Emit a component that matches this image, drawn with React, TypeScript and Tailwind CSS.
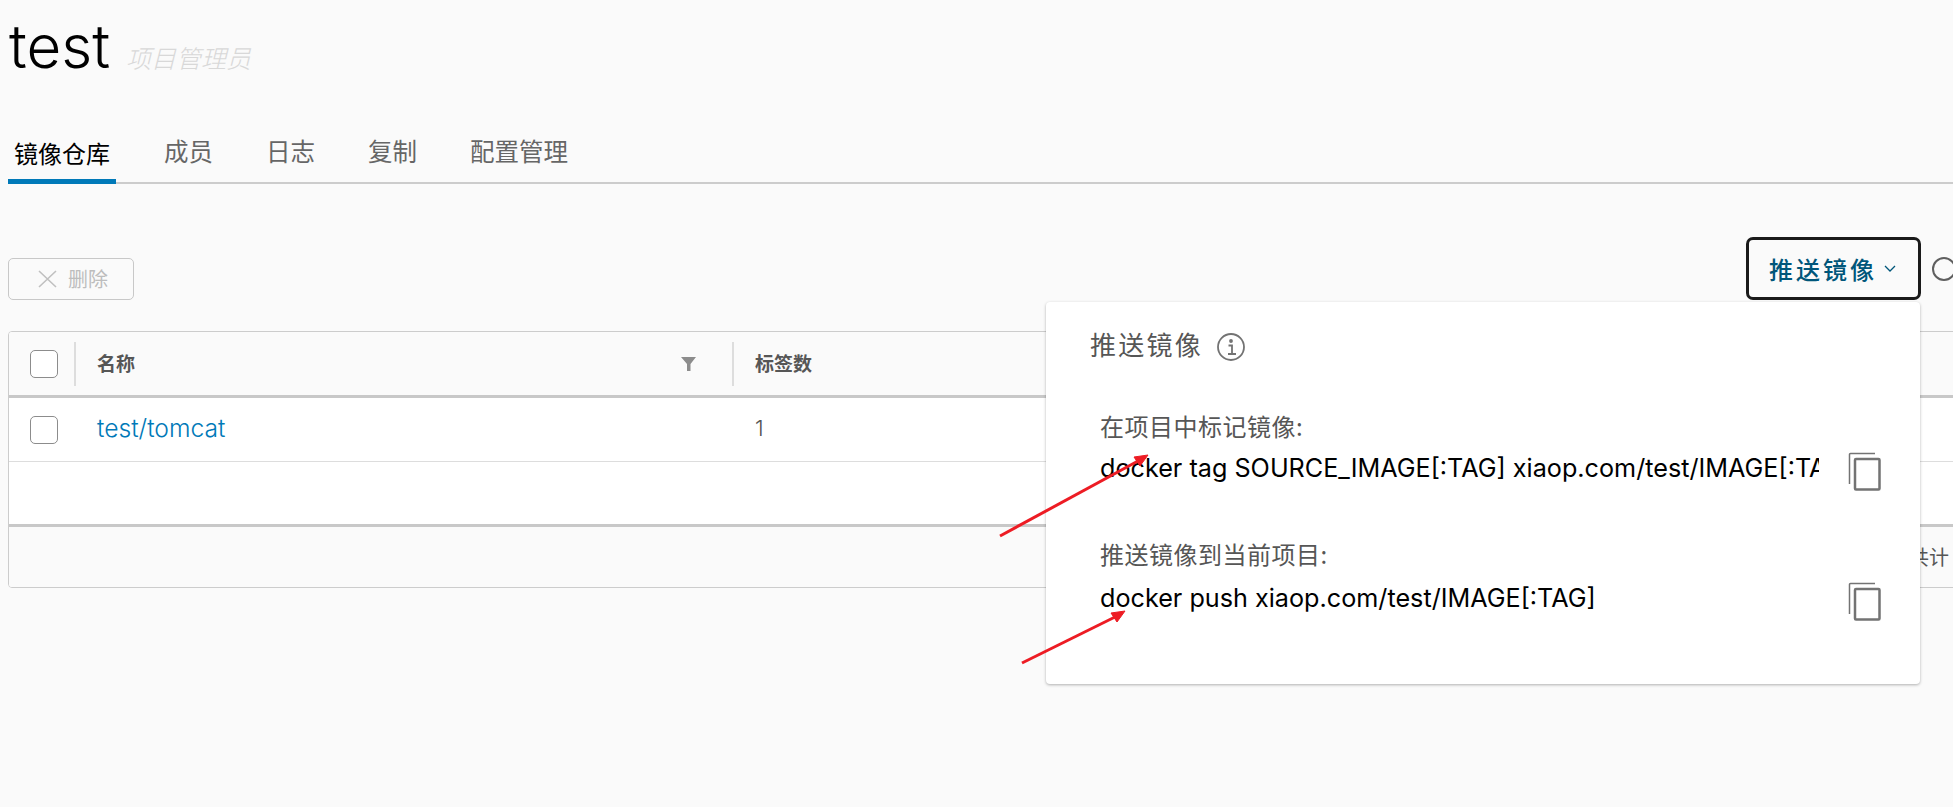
const CJK = '"Noto Sans CJK SC", sans-serif'
const LATIN = 'Inter, "Noto Sans CJK SC", sans-serif'

const tabs = ['镜像仓库', '成员', '日志', '复制', '配置管理']

function Checkbox() {
  return <div className="w-[28px] h-[28px] rounded-[5px] border border-[#8c8c8c] bg-white shrink-0" />
}

function CopyIcon() {
  return (
    <svg width="33" height="39" viewBox="0 0 33 39" fill="none" stroke="#737373" className="shrink-0 -mb-[8px]">
      <path d="M27 1.5H2.5a1 1 0 0 0-1 1V32" strokeWidth="1.5" />
      <rect x="7" y="7" width="24.5" height="30.5" rx="1" strokeWidth="2.5" />
    </svg>
  )
}

function CommandRow({ label, command, gap }: { label: string; command: string; gap: string }) {
  return (
    <div className="flex items-end justify-between">
      <div className="w-[719px] min-w-0">
        <p className="text-[24px] leading-[30px] tracking-[0.5px] text-[#565656]">{label}</p>
        <p
          className={`${gap} text-[25.2px] leading-[30px] text-black whitespace-nowrap overflow-hidden`}
          style={{ fontFamily: LATIN }}
        >
          {command}
        </p>
      </div>
      <CopyIcon />
    </div>
  )
}

export default function App() {
  return (
    <div
      className="relative w-[1953px] h-[807px] overflow-hidden bg-[#fafafa] pl-[8px]"
      style={{ fontFamily: CJK }}
    >
      <div className="flex items-baseline h-[92px] pt-[11px] pl-[1px]">
        <h1 className="text-[60px] leading-[70px] font-light text-black" style={{ fontFamily: LATIN }}>
          test
        </h1>
        <span className="ml-[16px] text-[25px] italic font-light text-[#d8d8d8]">项目管理员</span>
      </div>

      <div className="flex h-[92px] border-b-2 border-[#cccccc] gap-[45px] items-end w-[1945px]">
        {tabs.map((tab, i) => (
          <div
            key={tab}
            className={
              i === 0
                ? 'h-[49px] -mb-[2px] px-[6px] -mr-[1px] border-b-[5px] border-[#0079b8] text-[24px] leading-[36px] text-black'
                : 'h-[49px] px-[4px] text-[24.5px] leading-[36px] text-[#666666]'
            }
          >
            {tab}
          </div>
        ))}
      </div>

      <div className="flex items-end justify-between w-[1948px] mt-[53px]">
        <button className="flex items-center gap-[11px] w-[126px] h-[42px] pl-[29px] rounded-[5px] border border-[#c8c8c8] text-[20px] text-[#bdbdbd]">
          <svg width="19" height="18" viewBox="0 0 19 18" stroke="#c0c0c0" strokeWidth="1.6" fill="none">
            <path d="M1 1l17 16M18 1L1 17" />
          </svg>
          删除
        </button>
        <div className="flex items-center gap-[11px]">
          <button className="flex items-center justify-between w-[175px] h-[63px] pl-[20px] pr-[22px] rounded-[7px] border-[3px] border-[#1a1a1a] text-[24px] tracking-[3px] font-medium text-[#00567a]">
            推送镜像
            <svg width="12" height="7" viewBox="0 0 12 7" fill="none" stroke="#00567a" strokeWidth="1.3">
              <path d="M1 1l5 5 5-5" />
            </svg>
          </button>
          <svg width="24" height="24" viewBox="0 0 24 24" fill="none" stroke="#5f5f5f" strokeWidth="2" className="shrink-0">
            <circle cx="12" cy="12" r="11" />
          </svg>
        </div>
      </div>

      <div className="mt-[31px] w-[2000px] h-[257px] rounded-[4px] border border-[#cccccc] bg-white flex flex-col overflow-hidden">
        <div className="flex items-center h-[66px] bg-[#fafafa] border-b-[3px] border-[#c8c8c8] shrink-0">
          <div className="w-[67px] pl-[21px] h-[44px] border-r-2 border-[#dddddd] flex items-center">
            <Checkbox />
          </div>
          <div className="w-[658px] pl-[21px] pr-[36px] h-[44px] border-r-2 border-[#dddddd] flex items-center justify-between text-[19px] font-bold text-[#565656]">
            名称
            <svg width="15" height="14" viewBox="0 0 15 14" fill="#8c8c8c">
              <path d="M0 0h15L9.5 7v7H6V7z" />
            </svg>
          </div>
          <div className="pl-[21px] text-[19px] font-bold text-[#565656]">标签数</div>
        </div>
        <div className="flex items-center h-[64px] border-b border-[#dddddd] shrink-0">
          <div className="w-[67px] pl-[21px] flex items-center">
            <Checkbox />
          </div>
          <a className="w-[658px] pl-[21px] -mt-[2px] text-[24.7px] font-light text-[#0079b8]" style={{ fontFamily: LATIN }}>
            test/tomcat
          </a>
          <div className="pl-[21px] -mt-[2px] text-[22px] font-light text-[#565656]" style={{ fontFamily: LATIN }}>
            1
          </div>
        </div>
        <div className="h-[65px] border-b-[3px] border-[#c8c8c8] shrink-0" />
        <div className="flex-1 bg-[#fafafa] flex items-center justify-end pr-[58px] text-[20px] text-[#565656]">共计</div>
      </div>

      <div className="absolute left-[1046px] top-[302px] w-[874px] h-[382px] rounded-[4px] bg-white shadow-[0_1px_3px_rgba(0,0,0,0.3)] pl-[54px] pr-[39px] pt-[24px]">
        <div className="flex items-center gap-[14px] -ml-[10px]">
          <span className="text-[26px] leading-[36px] tracking-[2.25px] text-[#565656]">推送镜像</span>
          <svg width="28" height="28" viewBox="0 0 28 28" fill="none" stroke="#737373" strokeWidth="1.8" className="mt-[5px]">
            <circle cx="14" cy="14" r="13" />
            <path d="M11.5 12.5H15V21M11 21h8" />
            <circle cx="14" cy="8" r="1" fill="#737373" />
          </svg>
        </div>
        <div className="mt-[49px] flex flex-col gap-[56px]">
          <CommandRow
            label="在项目中标记镜像:"
            command="docker tag SOURCE_IMAGE[:TAG] xiaop.com/test/IMAGE[:TAG]"
            gap="mt-[12px]"
          />
          <CommandRow
            label="推送镜像到当前项目:"
            command="docker push xiaop.com/test/IMAGE[:TAG]"
            gap="mt-[14px]"
          />
        </div>
      </div>

      <svg className="absolute left-0 top-0 pointer-events-none" width="1953" height="807" fill="#ed1c24" stroke="#ed1c24">
        <path d="M1000 536L1138 461" strokeWidth="3" />
        <polygon points="1148,455 1134,457 1140,466" />
        <path d="M1022 663L1115 617" strokeWidth="3" />
        <polygon points="1125,611 1111,613 1117,622" />
      </svg>
    </div>
  )
}
